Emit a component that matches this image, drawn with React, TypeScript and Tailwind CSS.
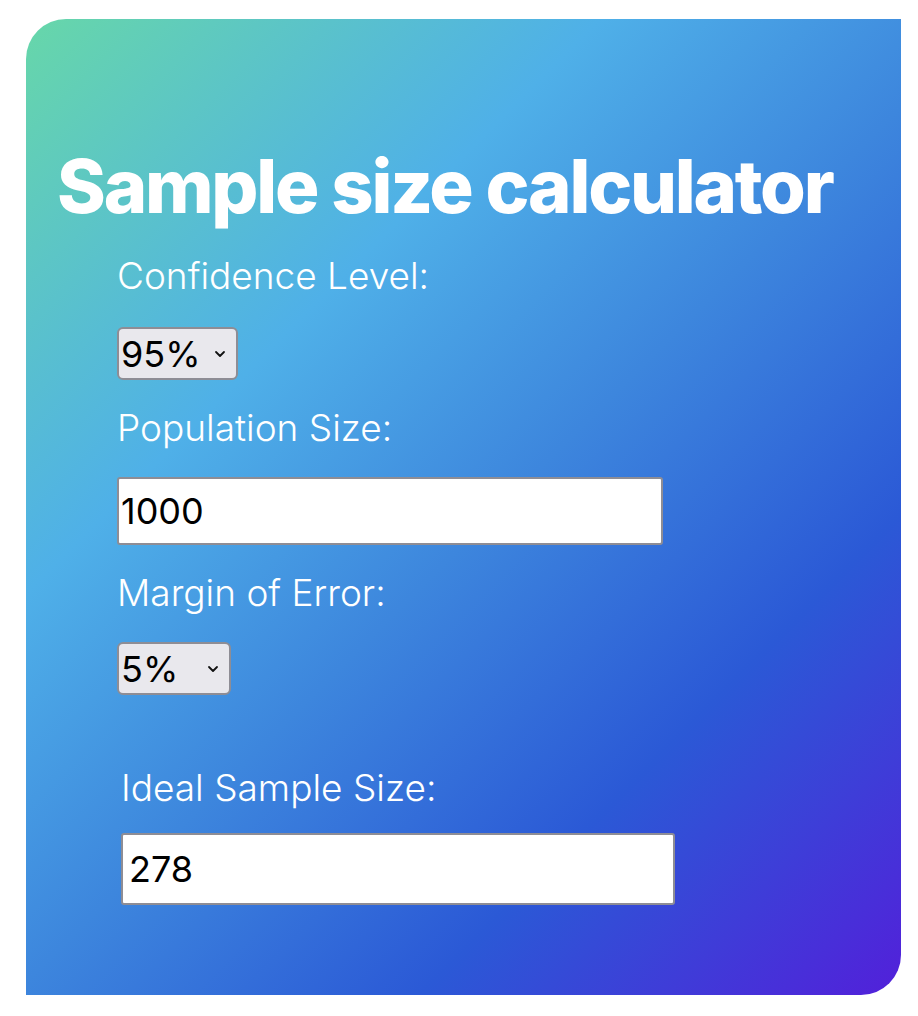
import React, { useState } from "react";

const Chevron: React.FC = () => (
  <svg width="12" height="8" viewBox="0 0 12 8" className="pointer-events-none absolute top-1/2 -translate-y-1/2 right-[12px]">
    <path d="M2 2l4 4 4-4" fill="none" stroke="#111" strokeWidth="1.8" strokeLinecap="round" strokeLinejoin="round" />
  </svg>
);

const App: React.FC = () => {
  const [confidence, setConfidence] = useState<string>("95");
  const [population, setPopulation] = useState<string>("1000");
  const [margin, setMargin] = useState<string>("5");

  // Cochran formula with finite population correction
  const z: Record<string, number> = { "90": 1.645, "95": 1.96, "99": 2.576 };
  const e = Number(margin) / 100;
  const n0 = (z[confidence] * z[confidence] * 0.25) / (e * e);
  const N = Number(population) || 0;
  const sample = N > 0 ? Math.round(n0 / (1 + (n0 - 1) / N)) : 0;

  return (
    <div className="min-h-screen bg-white pt-[19px] pl-[26px] font-['Inter','Liberation_Sans',sans-serif]">
      <div className="w-[875px] h-[976px] rounded-tl-[40px] rounded-br-[40px] bg-[linear-gradient(135deg,#67d7a9_0%,#4fb0e8_31%,#3d86dd_52%,#2b59d6_74%,#5220da_100%)] text-white">
        <h1 className="pt-[112px] pl-[31px] text-[74px] leading-[110px] font-extrabold tracking-[-0.03em]">
          Sample size calculator
        </h1>

        {/* Form */}
        <div className="pl-[91px]">
          <label className="block mt-[5px] text-[37px] leading-[60px] font-light">Confidence Level:</label>
          <div className="relative mt-[21px] w-[121px] h-[53px]">
            <select
              value={confidence}
              onChange={(ev) => setConfidence(ev.target.value)}
              className="appearance-none block w-full h-[53px] rounded-[6px] border-2 border-[#8e8d95] bg-[#e9e8ed] pl-[2px] text-[36px] leading-none text-black outline-none"
            >
              <option value="90">90%</option>
              <option value="95">95%</option>
              <option value="99">99%</option>
            </select>
            <Chevron />
          </div>

          <label className="block mt-[18px] text-[37px] leading-[60px] font-light">Population Size:</label>
          <input
            type="text"
            value={population}
            onChange={(ev) => setPopulation(ev.target.value)}
            className="block mt-[19px] w-[546px] h-[68px] rounded-[3px] border-2 border-[#8e8d95] bg-white pl-[2px] text-[36px] text-black outline-none"
          />

          <label className="block mt-[18px] text-[37px] leading-[60px] font-light">Margin of Error:</label>
          <div className="relative mt-[19px] w-[114px] h-[53px]">
            <select
              value={margin}
              onChange={(ev) => setMargin(ev.target.value)}
              className="appearance-none block w-full h-[53px] rounded-[6px] border-2 border-[#8e8d95] bg-[#e9e8ed] pl-[2px] text-[36px] leading-none text-black outline-none"
            >
              <option value="1">1%</option>
              <option value="3">3%</option>
              <option value="5">5%</option>
              <option value="10">10%</option>
            </select>
            <Chevron />
          </div>
        </div>

        {/* Result */}
        <div className="pl-[95px] mt-[63px]">
          <label className="block text-[37px] leading-[60px] font-light">Ideal Sample Size:</label>
          <input
            type="text"
            readOnly
            value={sample}
            className="block mt-[15px] w-[554px] h-[72px] rounded-[3px] border-2 border-[#8e8d95] bg-white pl-[6px] text-[36px] text-black outline-none"
          />
        </div>
      </div>
    </div>
  );
};

export default App;
